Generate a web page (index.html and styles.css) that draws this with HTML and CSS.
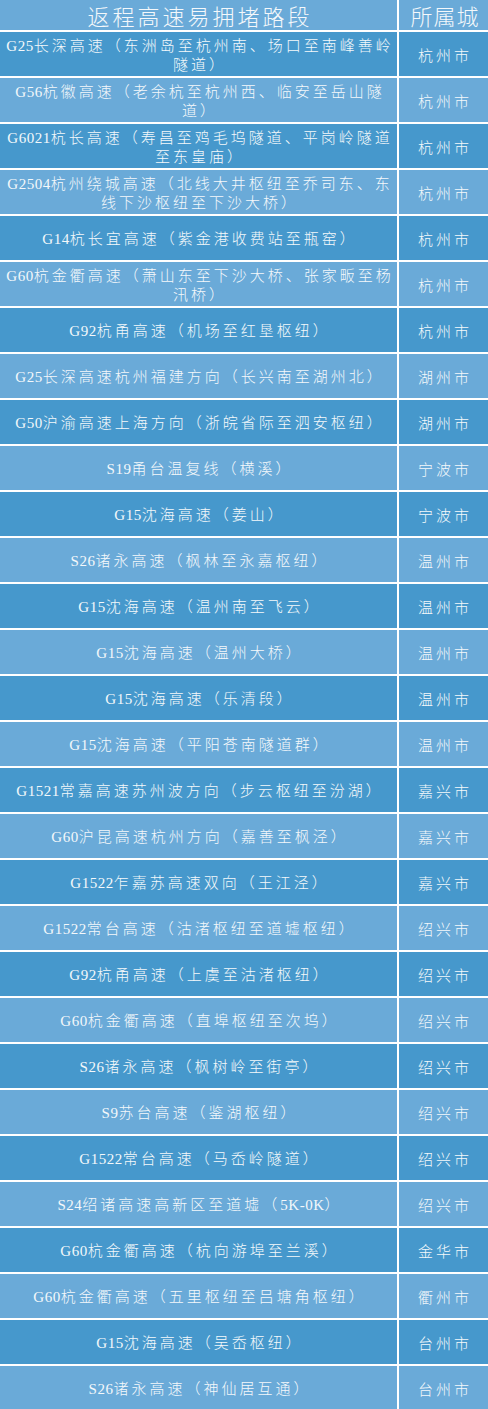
FILE: index.html
```html
<!DOCTYPE html>
<html lang="zh-CN">
<head>
<meta charset="utf-8">
<title>返程高速易拥堵路段</title>
<link rel="stylesheet" href="styles.css">
</head>
<body>
<div class="table">
  <div class="cell head"><p class="t">返程高速易拥堵路段</p></div>
  <div class="cell head city-head"><p class="t">所属城</p></div>

  <div class="cell dark"><p class="t"><span class="code">G25</span>长深高速（东洲岛至杭州南、场口至南峰善岭<br>隧道）</p></div><div class="cell dark city"><p class="t">杭州市</p></div>
  <div class="cell light"><p class="t"><span class="code">G56</span>杭徽高速（老余杭至杭州西、临安至岳山隧<br>道）</p></div><div class="cell light city"><p class="t">杭州市</p></div>
  <div class="cell dark"><p class="t"><span class="code">G6021</span>杭长高速（寿昌至鸡毛坞隧道、平岗岭隧道<br>至东皇庙）</p></div><div class="cell dark city"><p class="t">杭州市</p></div>
  <div class="cell light"><p class="t"><span class="code">G2504</span>杭州绕城高速（北线大井枢纽至乔司东、东<br>线下沙枢纽至下沙大桥）</p></div><div class="cell light city"><p class="t">杭州市</p></div>
  <div class="cell dark"><p class="t"><span class="code">G14</span>杭长宜高速（紫金港收费站至瓶窑）</p></div><div class="cell dark city"><p class="t">杭州市</p></div>
  <div class="cell light"><p class="t"><span class="code">G60</span>杭金衢高速（萧山东至下沙大桥、张家畈至杨<br>汛桥）</p></div><div class="cell light city"><p class="t">杭州市</p></div>
  <div class="cell dark"><p class="t"><span class="code">G92</span>杭甬高速（机场至红垦枢纽）</p></div><div class="cell dark city"><p class="t">杭州市</p></div>
  <div class="cell light"><p class="t"><span class="code">G25</span>长深高速杭州福建方向（长兴南至湖州北）</p></div><div class="cell light city"><p class="t">湖州市</p></div>
  <div class="cell dark"><p class="t"><span class="code">G50</span>沪渝高速上海方向（浙皖省际至泗安枢纽）</p></div><div class="cell dark city"><p class="t">湖州市</p></div>
  <div class="cell light"><p class="t"><span class="code">S19</span>甬台温复线（横溪）</p></div><div class="cell light city"><p class="t">宁波市</p></div>
  <div class="cell dark"><p class="t"><span class="code">G15</span>沈海高速（姜山）</p></div><div class="cell dark city"><p class="t">宁波市</p></div>
  <div class="cell light"><p class="t"><span class="code">S26</span>诸永高速（枫林至永嘉枢纽）</p></div><div class="cell light city"><p class="t">温州市</p></div>
  <div class="cell dark"><p class="t"><span class="code">G15</span>沈海高速（温州南至飞云）</p></div><div class="cell dark city"><p class="t">温州市</p></div>
  <div class="cell light"><p class="t"><span class="code">G15</span>沈海高速（温州大桥）</p></div><div class="cell light city"><p class="t">温州市</p></div>
  <div class="cell dark"><p class="t"><span class="code">G15</span>沈海高速（乐清段）</p></div><div class="cell dark city"><p class="t">温州市</p></div>
  <div class="cell light"><p class="t"><span class="code">G15</span>沈海高速（平阳苍南隧道群）</p></div><div class="cell light city"><p class="t">温州市</p></div>
  <div class="cell dark"><p class="t"><span class="code">G1521</span>常嘉高速苏州波方向（步云枢纽至汾湖）</p></div><div class="cell dark city"><p class="t">嘉兴市</p></div>
  <div class="cell light"><p class="t"><span class="code">G60</span>沪昆高速杭州方向（嘉善至枫泾）</p></div><div class="cell light city"><p class="t">嘉兴市</p></div>
  <div class="cell dark"><p class="t"><span class="code">G1522</span>乍嘉苏高速双向（王江泾）</p></div><div class="cell dark city"><p class="t">嘉兴市</p></div>
  <div class="cell light"><p class="t"><span class="code">G1522</span>常台高速（沽渚枢纽至道墟枢纽）</p></div><div class="cell light city"><p class="t">绍兴市</p></div>
  <div class="cell dark"><p class="t"><span class="code">G92</span>杭甬高速（上虞至沽渚枢纽）</p></div><div class="cell dark city"><p class="t">绍兴市</p></div>
  <div class="cell light"><p class="t"><span class="code">G60</span>杭金衢高速（直埠枢纽至次坞）</p></div><div class="cell light city"><p class="t">绍兴市</p></div>
  <div class="cell dark"><p class="t"><span class="code">S26</span>诸永高速（枫树岭至街亭）</p></div><div class="cell dark city"><p class="t">绍兴市</p></div>
  <div class="cell light"><p class="t"><span class="code">S9</span>苏台高速（鉴湖枢纽）</p></div><div class="cell light city"><p class="t">绍兴市</p></div>
  <div class="cell dark"><p class="t"><span class="code">G1522</span>常台高速（马岙岭隧道）</p></div><div class="cell dark city"><p class="t">绍兴市</p></div>
  <div class="cell light"><p class="t"><span class="code">S24</span>绍诸高速高新区至道墟（<span class="code">5K-0K</span>）</p></div><div class="cell light city"><p class="t">绍兴市</p></div>
  <div class="cell dark"><p class="t"><span class="code">G60</span>杭金衢高速（杭向游埠至兰溪）</p></div><div class="cell dark city"><p class="t">金华市</p></div>
  <div class="cell light"><p class="t"><span class="code">G60</span>杭金衢高速（五里枢纽至吕塘角枢纽）</p></div><div class="cell light city"><p class="t">衢州市</p></div>
  <div class="cell dark"><p class="t"><span class="code">G15</span>沈海高速（吴岙枢纽）</p></div><div class="cell dark city"><p class="t">台州市</p></div>
  <div class="cell light"><p class="t"><span class="code">S26</span>诸永高速（神仙居互通）</p></div><div class="cell light city"><p class="t">台州市</p></div>
</div>
</body>
</html>
```

FILE: styles.css
```css
html, body {
  margin: 0;
  padding: 0;
  background: #4698cc;
}

body {
  font-family: "Noto Sans CJK SC", "Noto Sans", sans-serif;
  color: #f4f8fb;
}

.table {
  display: grid;
  grid-template-columns: 397px 89px;
  grid-template-rows: 30px;
  grid-auto-rows: 44px;
  column-gap: 2px;
  row-gap: 2px;
  background: #ffffff;
  width: 488px;
}

.cell {
  display: flex;
  align-items: center;
  justify-content: center;
  overflow: hidden;
  font-size: 15px;
  font-weight: 300;
  line-height: 17px;
  letter-spacing: 3px;
}

.t {
  margin: 0;
  text-align: center;
  white-space: nowrap;
  padding-left: 3px;
}

.dark {
  background: #4698cc;
}

.light {
  background: #6aaad8;
}

.head {
  background: #6aaad8;
  font-size: 22px;
  line-height: 30px;
  letter-spacing: 3px;
}

.city-head {
  letter-spacing: 1px;
}

.code {
  font-family: "Liberation Serif", serif;
  font-weight: 400;
  font-size: 15px;
  letter-spacing: 0.5px;
}
```
